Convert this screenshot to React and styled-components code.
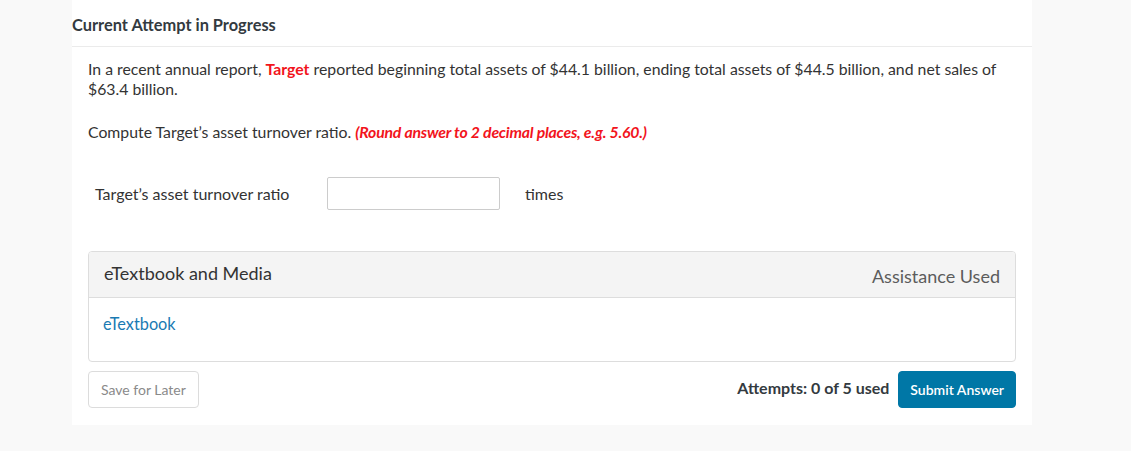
import React from 'react';
import styled, { createGlobalStyle } from 'styled-components';

const GlobalStyle = createGlobalStyle`
    html, body {
        margin: 0;
        padding: 0;
        background: #f9f9f9;
    }
    body {
        font-family: Lato, "Liberation Sans", sans-serif;
        color: #333333;
    }
`;

const Card = styled.div`
    width: 960px;
    margin-left: 72px;
    background: #ffffff;
    padding-bottom: 17px;
`;

const Header = styled.div`
    height: 47px;
    display: flex;
    align-items: center;
    border-bottom: 1px solid #ebebeb;
    font-size: 16.4px;
    font-weight: 700;
    color: #333a40;
    padding-top: 2px;
    box-sizing: border-box;
`;

const Body = styled.div`
    padding: 0 16px;
`;

const Paragraph = styled.p`
    margin: ${(p) => p.$top}px 0 0;
    font-size: 15.8px;
    line-height: 20px;
    color: #333333;
`;

const Red = styled.span`
    color: #f2141c;
    font-weight: 700;
    font-style: ${(p) => (p.$italic ? 'italic' : 'normal')};
    letter-spacing: ${(p) => (p.$italic ? '-0.2px' : '0')};
`;

const AnswerRow = styled.div`
    display: flex;
    align-items: center;
    margin-top: 35px;
    padding-left: 7px;
    font-size: 16px;
    color: #333333;
`;

const Label = styled.span`
    width: 232px;
`;

const Input = styled.input`
    width: 173px;
    height: 33px;
    box-sizing: border-box;
    border: 1px solid #cccccc;
    border-radius: 2px;
    outline: none;
    font-family: inherit;
    font-size: 16px;
`;

const Unit = styled.span`
    margin-left: 25px;
`;

const MediaPanel = styled.div`
    margin-top: 41px;
    border: 1px solid #dddddd;
    border-radius: 4px;
    overflow: hidden;
`;

const MediaHeader = styled.div`
    height: 45px;
    display: flex;
    align-items: center;
    justify-content: space-between;
    padding: 0 15px;
    background: #f4f4f4;
    border-bottom: 1px solid #dddddd;
    font-size: 18px;
`;

const MediaTitle = styled.span`
    color: #333333;
    margin-top: -4px;
`;

const Assistance = styled.span`
    color: #5c5c5c;
    margin-top: 3px;
`;

const MediaBody = styled.div`
    height: 63px;
    padding: 16px 14px 0;
    box-sizing: border-box;
`;

const Link = styled.a`
    color: #1a7ab3;
    font-size: 16.3px;
    text-decoration: none;
`;

const Footer = styled.div`
    display: flex;
    align-items: center;
    margin-top: 9px;
`;

const Button = styled.button`
    height: 37px;
    padding: 0 ${(p) => (p.$primary ? 11 : 12)}px;
    border-radius: 4px;
    font-family: inherit;
    font-size: 14px;
    border: 1px solid ${(p) => (p.$primary ? '#0077a6' : '#dcdcdc')};
    background: ${(p) => (p.$primary ? '#0077a6' : '#ffffff')};
    color: ${(p) => (p.$primary ? '#ffffff' : '#8a8a8a')};
    font-weight: ${(p) => (p.$primary ? 600 : 400)};
`;

const Attempts = styled.span`
    margin-left: auto;
    margin-right: 9px;
    margin-top: -5px;
    font-size: 16px;
    font-weight: 700;
    color: #333a40;
`;

export default function App() {
    return (
        <>
            <GlobalStyle />
            <Card>
                <Header>Current Attempt in Progress</Header>
                <Body>
                    <Paragraph $top={12}>
                        In a recent annual report, <Red>Target</Red> reported beginning total assets of $44.1 billion, ending total assets of $44.5 billion, and net sales of $63.4 billion.
                    </Paragraph>
                    <Paragraph $top={23}>
                        Compute Target’s asset turnover ratio. <Red $italic>(Round answer to 2 decimal places, e.g. 5.60.)</Red>
                    </Paragraph>
                    <AnswerRow>
                        <Label>Target’s asset turnover ratio</Label>
                        <Input type="text" />
                        <Unit>times</Unit>
                    </AnswerRow>
                    <MediaPanel>
                        <MediaHeader>
                            <MediaTitle>eTextbook and Media</MediaTitle>
                            <Assistance>Assistance Used</Assistance>
                        </MediaHeader>
                        <MediaBody>
                            <Link href="#">eTextbook</Link>
                        </MediaBody>
                    </MediaPanel>
                    <Footer>
                        <Button>Save for Later</Button>
                        <Attempts>Attempts: 0 of 5 used</Attempts>
                        <Button $primary>Submit Answer</Button>
                    </Footer>
                </Body>
            </Card>
        </>
    );
}
